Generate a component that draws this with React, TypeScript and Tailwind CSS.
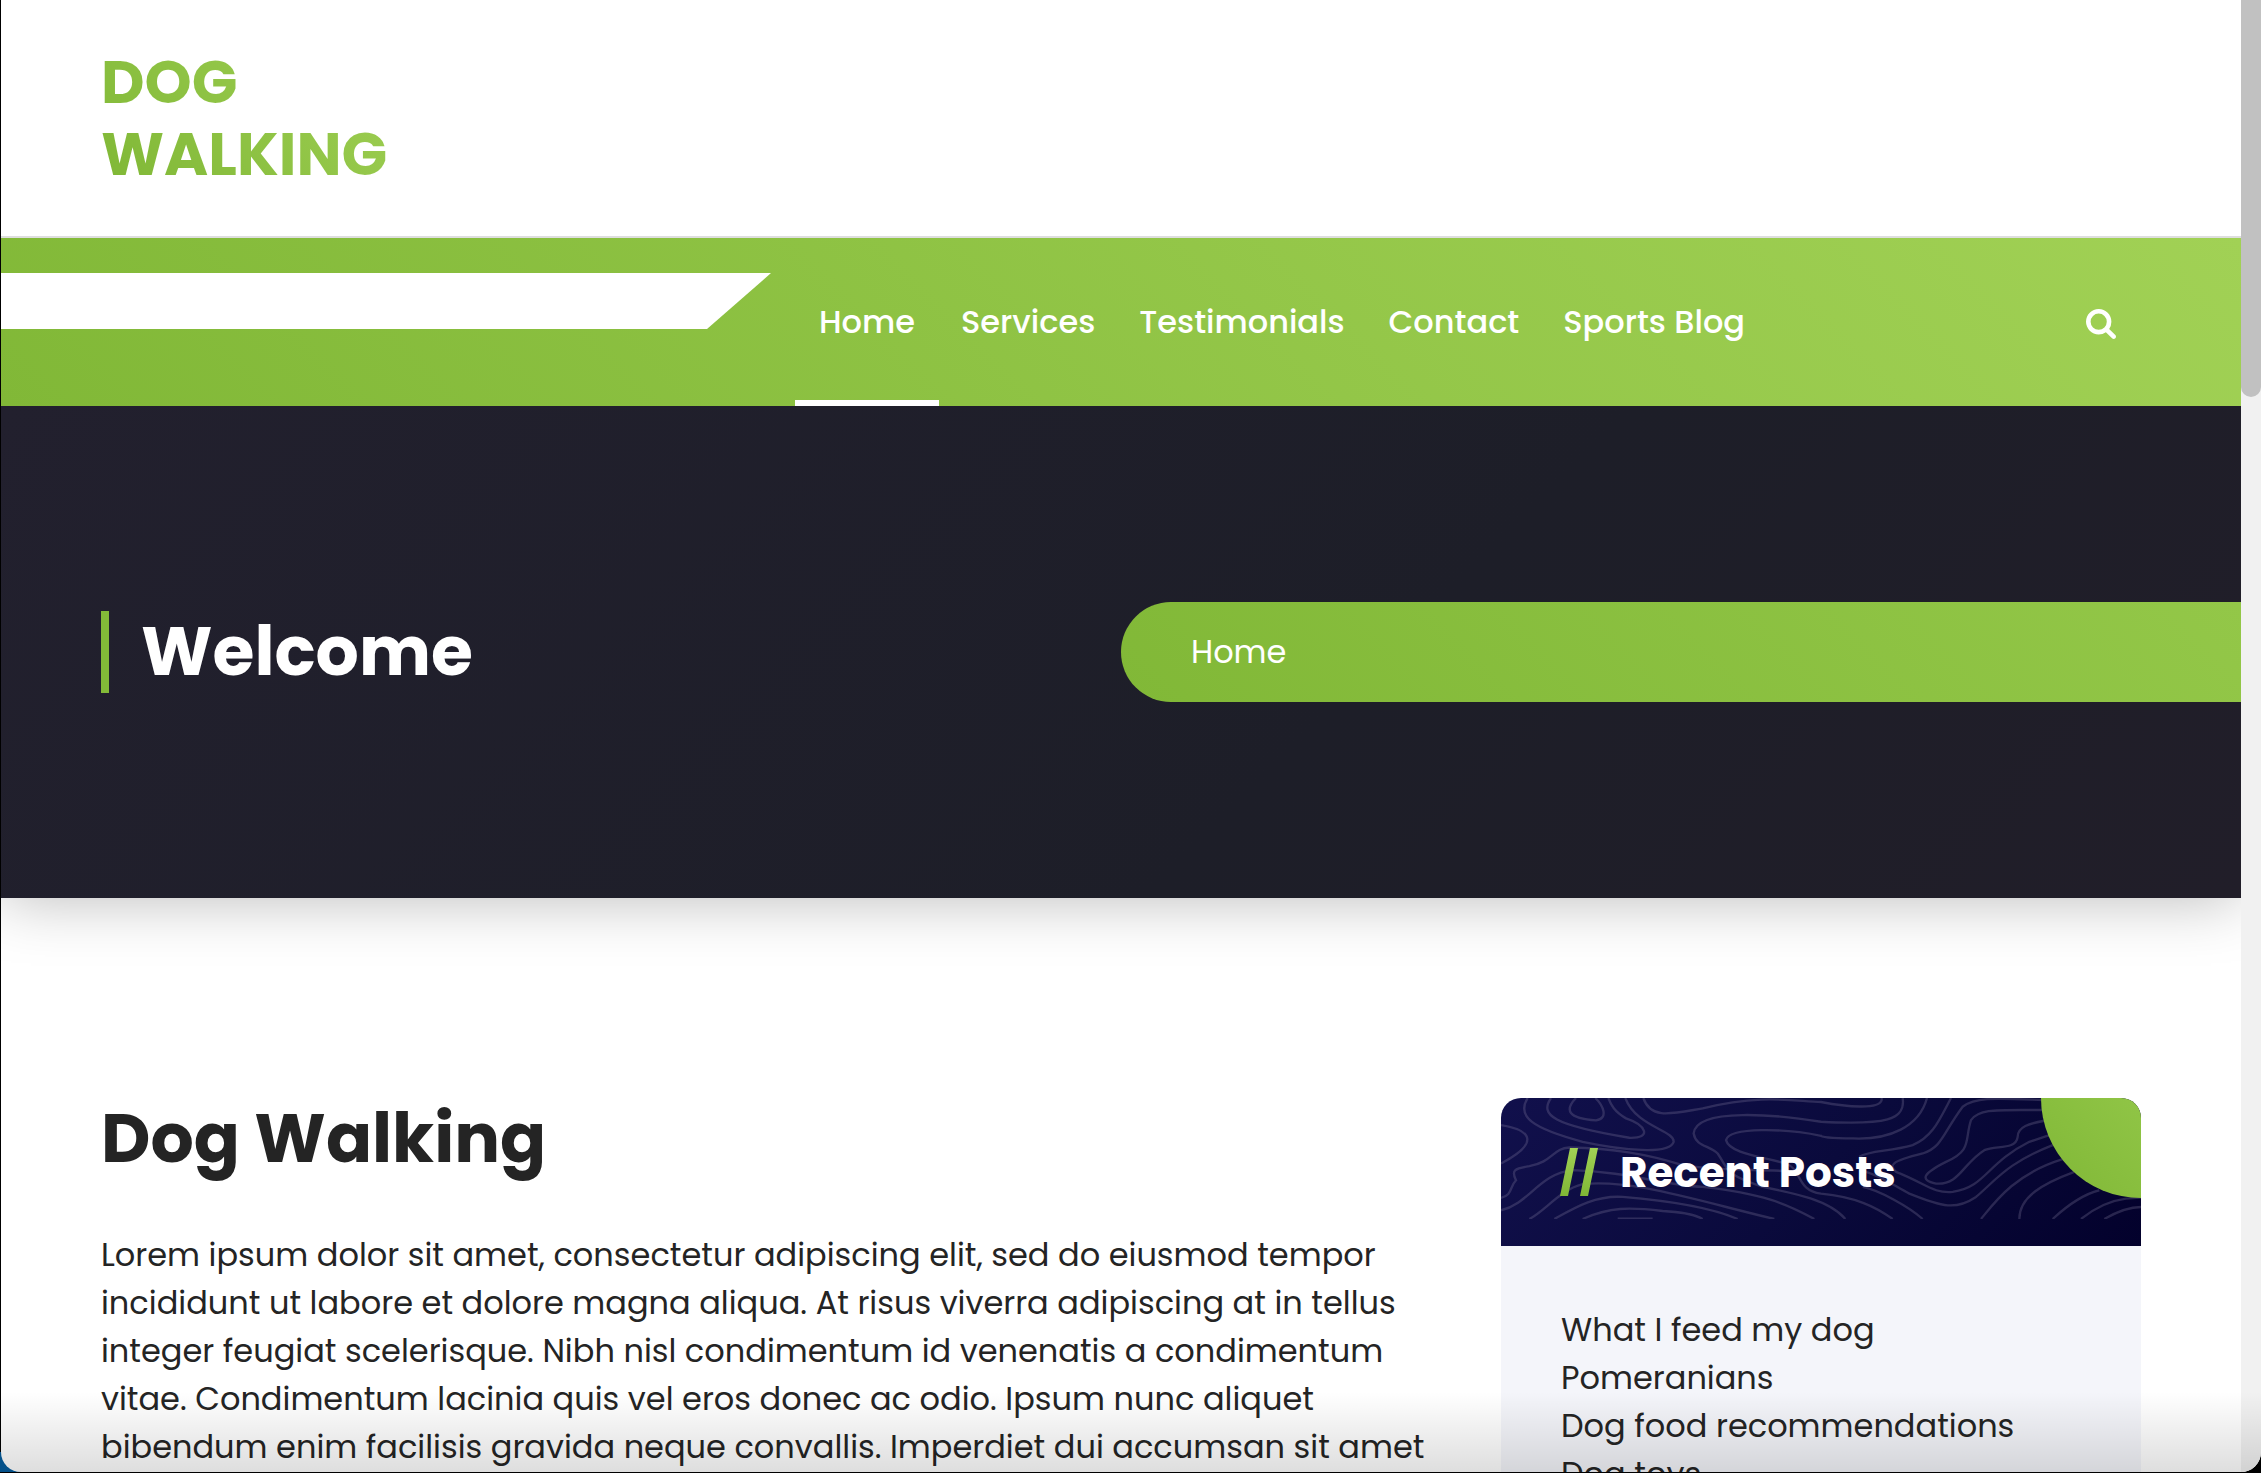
import React from "react";

const navLinks = ["Home", "Services", "Testimonials", "Contact", "Sports Blog"];

const introLines = [
  "Lorem ipsum dolor sit amet, consectetur adipiscing elit, sed do eiusmod tempor",
  "incididunt ut labore et dolore magna aliqua. At risus viverra adipiscing at in tellus",
  "integer feugiat scelerisque. Nibh nisl condimentum id venenatis a condimentum",
  "vitae. Condimentum lacinia quis vel eros donec ac odio. Ipsum nunc aliquet",
  "bibendum enim facilisis gravida neque convallis. Imperdiet dui accumsan sit amet",
];

const recentPosts = ["What I feed my dog", "Pomeranians", "Dog food recommendations", "Dog toys"];

const contours = [
  "M240 24C205 60 215 85 300 91C340 85 320 45 298 24",
  "M165 24C130 75 170 105 400 143C470 145 450 105 390 85C355 65 345 45 337 24",
  "M95 24C60 80 110 115 260 155C380 180 520 195 533 155C535 120 420 110 388 24",
  "M442 24C465 90 530 70 620 55C800 10 900 35 975 36C1050 50 1150 60 1157 30V24",
  "M15 105C110 120 130 160 15 220",
  "M15 323C50 315 40 290 60 270C45 240 55 235 100 228C170 215 170 175 220 172C350 175 450 190 560 225C680 245 800 235 900 245",
  "M15 360C100 340 130 250 230 240C400 245 500 285 620 290C800 310 870 340 955 386",
  "M100 386C150 360 190 300 260 282C400 265 600 330 835 386",
  "M175 386C240 350 300 315 380 320C500 330 640 350 725 386",
  "M260 386C340 350 400 350 500 362C560 365 600 375 620 386",
  "M365 385H470",
  "M1220 24C1230 90 1170 105 975 95C850 75 600 50 593 130C600 170 640 165 665 190C700 240 680 250 800 290C900 310 1000 330 1048 386",
  "M1293 24C1270 110 1180 150 1070 145C1000 145 975 140 975 137C870 115 700 110 690 150C700 190 800 200 870 220C920 240 900 300 975 310C1080 320 1140 350 1190 386",
  "M1365 24C1330 90 1310 140 1250 165C1180 185 1120 180 1090 200",
  "M1100 290C1150 300 1240 350 1280 386",
  "M1640 30C1500 25 1440 20 1400 50C1340 130 1340 170 1280 190C1180 215 1180 225 1200 245C1290 280 1310 310 1370 305C1470 290 1470 220 1600 155L1660 135",
  "M1640 60C1500 60 1450 55 1425 90C1405 150 1430 180 1350 215C1280 250 1270 270 1320 280C1390 285 1400 220 1465 180C1500 165 1560 180 1565 140C1565 110 1600 100 1645 92",
  "M1110 245C1160 260 1200 290 1240 310C1340 350 1380 360 1440 320C1500 270 1530 220 1670 165",
  "M1455 386C1500 330 1560 250 1700 207",
  "M1570 386C1570 320 1640 280 1735 245",
  "M1670 386C1720 340 1770 310 1810 300",
  "M1755 386C1800 350 1850 330 1890 325L1935 322",
  "M1825 386C1870 360 1900 350 1935 350",
];

function SearchIcon() {
  return (
    <svg viewBox="0 128 1664 1664" className="size-[30px]" fill="currentColor" aria-hidden="true">
      <path d="M1152 832q0-185-131.5-316.5t-316.5-131.5-316.5 131.5-131.5 316.5 131.5 316.5 316.5 131.5 316.5-131.5 131.5-316.5zm512 832q0 52-38 90t-90 38q-54 0-90-38l-343-342q-179 124-399 124-143 0-273.5-55.5t-225-150-150-225-55.5-273.5 55.5-273.5 150-225 225-150 273.5-55.5 273.5 55.5 225 150 150 225 55.5 273.5q0 220-124 399l343 343q37 37 37 90z" />
    </svg>
  );
}

function Header() {
  return (
    <header className="relative z-10">
      <div className="border-b-2 border-[#dedede] bg-white px-[100px] py-[46px]">
        <a
          href="#"
          className="block w-[286px] bg-linear-[45deg,#7fb735,#a0d055] bg-clip-text text-[60px] leading-[72px] font-bold text-transparent"
        >
          DOG
          <br />
          WALKING
        </a>
      </div>
      <div className="flex h-[168px] items-stretch bg-linear-[45deg,#81b837,#a1d155] text-white">
        <div className="mt-[35px] h-14 w-[770px] shrink-0 bg-white [clip-path:polygon(0_0,100%_0,calc(100%-64px)_100%,0_100%)]" />
        <nav className="ml-6 flex">
          {navLinks.map((label, i) => (
            <a
              key={label}
              href="#"
              className={
                i === 0
                  ? "flex items-center border-y-6 border-transparent border-b-white px-6 text-[32px] font-medium whitespace-nowrap"
                  : "flex items-center px-[22px] text-[32px] font-medium whitespace-nowrap"
              }
            >
              {label}
            </a>
          ))}
        </nav>
        <button type="button" aria-label="Search" className="mr-[125px] ml-auto pt-1">
          <SearchIcon />
        </button>
      </div>
    </header>
  );
}

function Hero() {
  return (
    <section className="grid h-[492px] grid-cols-2 items-center bg-linear-[135deg,#22202e,#1d1e28_60%,#211e29] text-white shadow-[0_0_60px_rgba(0,0,0,0.28)]">
      <div className="pl-[100px]">
        <h2 className="border-l-8 border-[#83ba38] pl-8 text-[68px] leading-[82px] font-bold">Welcome</h2>
      </div>
      <div className="flex h-[100px] items-center rounded-l-full bg-linear-[45deg,#81b837,#93c748] pl-[70px]">
        <a href="#" className="text-[32px]">
          Home
        </a>
      </div>
    </section>
  );
}

function RecentPosts() {
  return (
    <aside className="w-[640px] shrink-0 overflow-hidden rounded-t-[20px] bg-[#f4f5fa]">
      <div className="relative flex h-[148px] items-center gap-[22px] bg-linear-[135deg,#11104c,#0a0a3c_50%,#03012c] pl-[59px] text-white">
        <svg
          viewBox="15 24 1920 362"
          preserveAspectRatio="none"
          className="absolute top-0 left-0 h-[121px] w-full"
          fill="none"
          stroke="#8d86a8"
          strokeOpacity="0.27"
          strokeWidth="7"
          aria-hidden="true"
        >
          {contours.map((d) => (
            <path key={d} d={d} />
          ))}
        </svg>
        <span className="absolute top-0 right-0 size-[100px] rounded-bl-full bg-linear-[45deg,#80b736,#90c546]" />
        <svg viewBox="0 0 38 48" className="relative h-12 w-[38px]" aria-hidden="true">
          <defs>
            <linearGradient id="slash" x1="0" y1="1" x2="0" y2="0">
              <stop stopColor="#80b736" />
              <stop offset="1" stopColor="#a1d155" />
            </linearGradient>
          </defs>
          <path d="M10 0H18L8 48H0ZM30 0H38L28 48H20Z" fill="url(#slash)" />
        </svg>
        <h3 className="relative text-[42px] font-bold">Recent Posts</h3>
      </div>
      <ul className="px-[60px] pt-[60px] text-[32px] leading-[48px]">
        {recentPosts.map((title) => (
          <li key={title}>
            <a href="#">{title}</a>
          </li>
        ))}
      </ul>
    </aside>
  );
}

export default function App() {
  return (
    <div className="relative h-screen overflow-hidden bg-black pb-px pl-px font-['Poppins','Inter','Noto_Sans',sans-serif] text-[#242424]">
      <div className="absolute bottom-px left-0 size-5 bg-[#04518a]" />
      <div className="relative flex h-full overflow-hidden rounded-b-[20px] bg-white">
        <div className="min-w-0 flex-1 overflow-hidden">
          <Header />
          <Hero />
          <main className="flex items-start gap-[60px] px-[100px] pt-[200px]">
            <article className="min-w-0 flex-1">
              <h1 className="mb-[51px] text-[68px] leading-[82px] font-bold">Dog Walking</h1>
              <p className="text-[32px] leading-[48px] whitespace-nowrap">
                {introLines.map((line) => (
                  <React.Fragment key={line}>
                    {line}
                    <br />
                  </React.Fragment>
                ))}
              </p>
            </article>
            <RecentPosts />
          </main>
        </div>
        <div className="w-5 shrink-0 bg-[#f1f1f1]">
          <div className="h-[27%] rounded-b-full bg-[#c1c1c1]" />
        </div>
        <div className="pointer-events-none absolute inset-x-0 bottom-0 h-20 bg-linear-to-b from-transparent to-black/13" />
      </div>
    </div>
  );
}
